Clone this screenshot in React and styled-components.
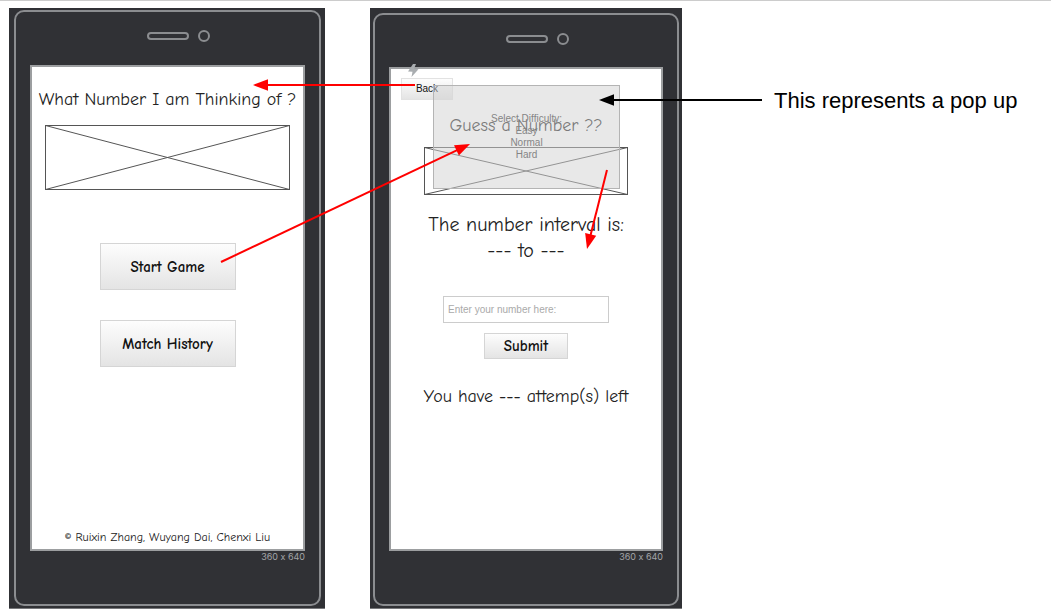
import React from "react";
import styled, { createGlobalStyle } from "styled-components";

const hand = `"Comic Sans MS", "Comic Neue", "Open Sans", sans-serif`;
const plain = `Arial, "Liberation Sans", sans-serif`;

const GlobalStyle = createGlobalStyle`
  *, *::before, *::after { box-sizing: border-box; }
  body { margin: 0; background: #fff; font-family: ${plain}; }
  h2, p { margin: 0; font-weight: 400; }
`;

const Canvas = styled.main`
  position: relative;
  display: flex;
  align-items: stretch;
  min-height: 100vh;
  padding: 7px 9px 6px;
  border-top: 1px solid #ccc;
  font-variant-ligatures: none;
`;

const Device = styled.section`
  flex: none;
  display: flex;
  width: ${(p) => p.$width}px;
  padding: ${(p) => p.$bezel};
  margin-right: ${(p) => p.$gap}px;
  background: #303135;
  border-bottom: 1px solid #77787b;
`;

const Shell = styled.div`
  flex: 1;
  display: flex;
  flex-direction: column;
  padding: 0 14px;
  border: 2px solid #8b8d90;
  border-radius: 10px;
`;

const Earpiece = styled.div`
  display: flex;
  align-items: center;
  justify-content: center;
  gap: 9px;
  height: ${(p) => p.$height}px;
  padding: 0 0 5px 22px;
`;

const Speaker = styled.span`
  width: 42px;
  height: 8px;
  border: 2px solid #8b8d90;
  border-radius: 4px;
`;

const Lens = styled.span`
  width: 12px;
  height: 12px;
  border: 2px solid #8b8d90;
  border-radius: 50%;
`;

const Screen = styled.div`
  position: relative;
  flex: 1;
  display: flex;
  flex-direction: column;
  align-items: center;
  background: #fff;
  border: 2px solid #9c9ea0;
`;

const Resolution = styled.p`
  height: 53px;
  color: #a3a5a8;
  font-family: Inter, sans-serif;
  font-size: 9px;
  line-height: 12px;
  text-align: right;
`;

const HandText = styled.p`
  margin-top: ${(p) => p.$top}px;
  color: #222;
  font-family: ${hand};
  font-size: ${(p) => p.$size}px;
  line-height: 26px;
  text-align: center;
  white-space: nowrap;
`;

const Picture = styled.svg`
  display: block;
  flex: none;
  width: ${(p) => p.$width}px;
  height: ${(p) => p.$height}px;
  margin-top: ${(p) => p.$top}px;
`;

const Button = styled.button`
  flex: none;
  width: ${(p) => p.$width}px;
  height: ${(p) => p.$height}px;
  margin-top: ${(p) => p.$top}px;
  padding: 0;
  color: #111;
  background: linear-gradient(#fdfdfd, #e4e4e4);
  border: 1px solid #d5d5d5;
  font-family: ${hand};
  font-size: 15px;
  font-weight: 600;
  line-height: 20px;
`;

const BackButton = styled(Button)`
  align-self: flex-start;
  margin-left: 10px;
  border-color: #e2e2e2;
  font-family: ${plain};
  font-size: 10px;
  font-weight: 400;
  line-height: 12px;
`;

const NumberInput = styled.input`
  flex: none;
  width: 166px;
  height: 27px;
  margin-top: 32px;
  padding: 0 4px;
  color: #333;
  background: #fff;
  border: 1px solid #ccc;
  font-family: ${plain};
  font-size: 10px;
  &::placeholder { color: #aaa; opacity: 1; }
`;

const Credits = styled.p`
  margin: auto 0 4px;
  color: #222;
  font-family: ${hand};
  font-size: 12px;
  line-height: 16px;
  white-space: nowrap;
`;

const Popup = styled.div`
  position: absolute;
  top: 16px;
  left: 42px;
  width: 187px;
  height: 104px;
  padding-top: 27px;
  color: #858585;
  background: rgba(210, 210, 210, 0.5);
  border: 1px solid #b4b4b4;
  font-size: 10px;
  line-height: 12px;
  text-align: center;
`;

const Trigger = styled.svg`
  position: absolute;
  top: -5px;
  left: 16px;
  width: 13px;
  height: 13px;
`;

const Note = styled.p`
  margin: 80px 0 0 82px;
  color: #000;
  font-size: 22px;
  line-height: 26px;
  white-space: nowrap;
`;

const Arrows = styled.svg`
  position: absolute;
  top: -1px;
  left: 0;
  width: 100%;
  height: 100%;
  pointer-events: none;
`;

function CrossedBox({ width, height, top }) {
  return (
    <Picture
      $width={width}
      $height={height}
      $top={top}
      viewBox={`0 0 ${width} ${height}`}
      fill="none"
      stroke="#555"
      aria-hidden="true"
    >
      <rect x="0.5" y="0.5" width={width - 1} height={height - 1} />
      <path d={`M0.5 0.5L${width - 0.5} ${height - 0.5}M${width - 0.5} 0.5L0.5 ${height - 0.5}`} />
    </Picture>
  );
}

function Phone({ width, bezel, gap, head, children }) {
  return (
    <Device $width={width} $bezel={bezel} $gap={gap}>
      <Shell>
        <Earpiece $height={head}>
          <Speaker />
          <Lens />
        </Earpiece>
        <Screen>{children}</Screen>
        <Resolution>360 x 640</Resolution>
      </Shell>
    </Device>
  );
}

const links = [
  { from: [415, 85], to: [253, 85], color: "#f00" },
  { from: [221, 262], to: [470, 144], color: "#f00" },
  { from: [607, 170], to: [587, 249], color: "#f00" },
  { from: [762, 100], to: [599, 100], color: "#000" },
];

function Arrow({ from, to, color }) {
  const dx = to[0] - from[0];
  const dy = to[1] - from[1];
  const length = Math.hypot(dx, dy);
  const angle = (Math.atan2(dy, dx) * 180) / Math.PI;
  return (
    <g transform={`translate(${from[0]} ${from[1]}) rotate(${angle})`}>
      <path d={`M0 0H${length - 13}`} stroke={color} strokeWidth="2" />
      <path d={`M${length} 0l-15 -5.7v11.4z`} fill={color} />
    </g>
  );
}

export default function App() {
  return (
    <>
      <GlobalStyle />
      <Canvas>
        <Phone width={316} bezel="2px 4px 2px 5px" gap={45} head={53}>
          <HandText as="h2" $size={18} $top={20}>What Number I am Thinking of ?</HandText>
          <CrossedBox width={245} height={65} top={12} />
          <Button type="button" $width={136} $height={47} $top={53}>Start Game</Button>
          <Button type="button" $width={136} $height={47} $top={30}>Match History</Button>
          <Credits>© Ruixin Zhang, Wuyang Dai, Chenxi Liu</Credits>
        </Phone>
        <Phone width={312} bezel="5px 3px 2px 3px" gap={10} head={52}>
          <BackButton type="button" $width={52} $height={22} $top={9}>Back</BackButton>
          <HandText as="h2" $size={18} $top={13}>Guess a Number ??</HandText>
          <CrossedBox width={204} height={48} top={8} />
          <HandText $size={20} $top={17}>
            The number interval is:
            <br />
            --- to ---
          </HandText>
          <NumberInput type="text" aria-label="Enter your number here" placeholder="Enter your number here:" />
          <Button type="button" $width={84} $height={26} $top={10}>Submit</Button>
          <HandText $size={18} $top={25}>You have --- attemp(s) left</HandText>
          <Popup>
            <p>Select Difficulty:</p>
            <p>Easy</p>
            <p>Normal</p>
            <p>Hard</p>
          </Popup>
          <Trigger viewBox="0 0 13 13" aria-hidden="true">
            <path d="M6 0L1 7.5L5.5 7.8L4.5 13L11.5 5.2L7 4.8L9 0Z" fill="#a9adb0" />
          </Trigger>
        </Phone>
        <Note>This represents a pop up</Note>
        <Arrows aria-hidden="true">
          {links.map((link) => (
            <Arrow key={link.from.join()} {...link} />
          ))}
        </Arrows>
      </Canvas>
    </>
  );
}
